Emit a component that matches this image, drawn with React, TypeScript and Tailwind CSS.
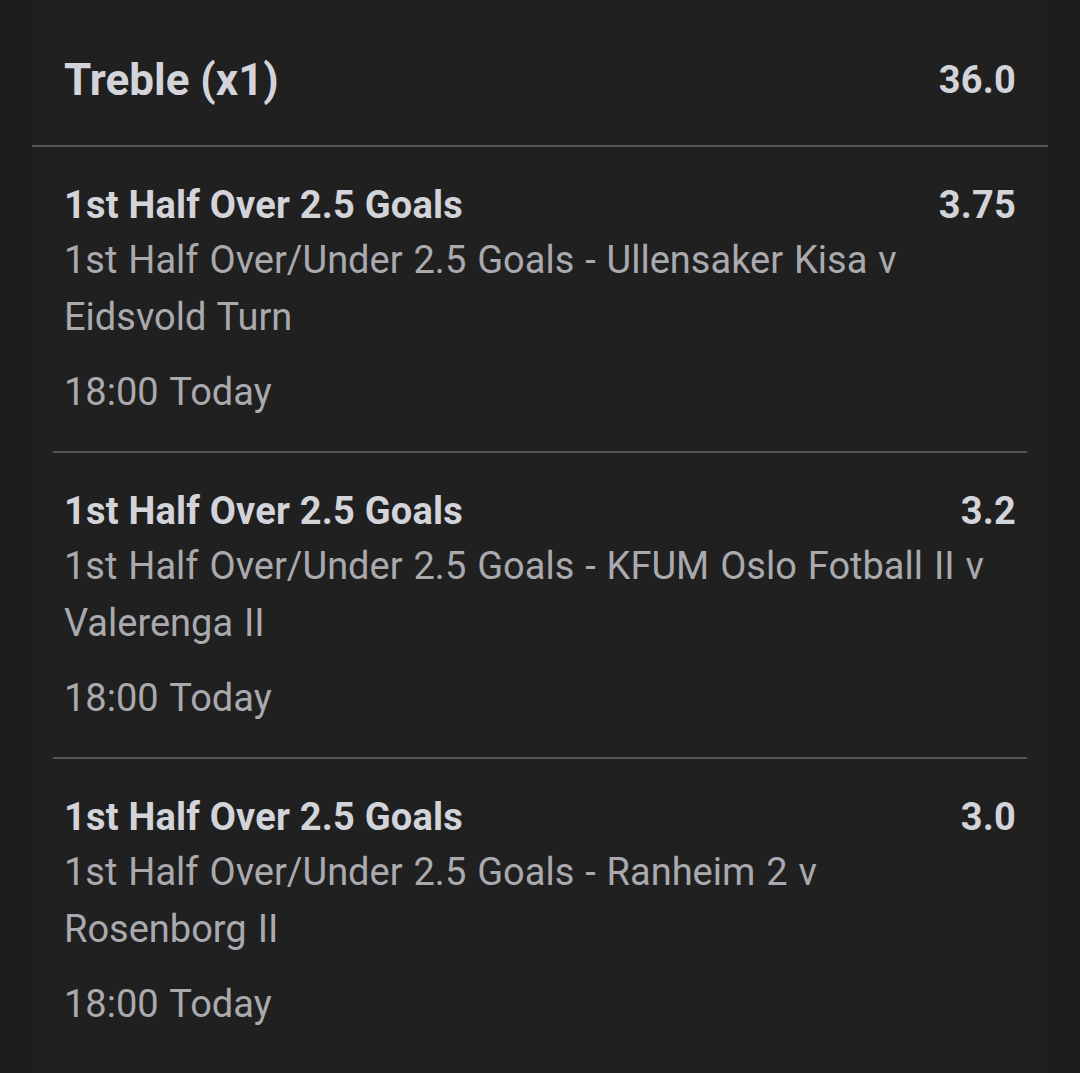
import React from 'react';

interface Selection {
  id: number;
  title: string;
  market: string;
  odds: string;
  time: string;
}

const selections: Selection[] = [
  {
    id: 1,
    title: '1st Half Over 2.5 Goals',
    market: '1st Half Over/Under 2.5 Goals - Ullensaker Kisa v Eidsvold Turn',
    odds: '3.75',
    time: '18:00 Today',
  },
  {
    id: 2,
    title: '1st Half Over 2.5 Goals',
    market: '1st Half Over/Under 2.5 Goals - KFUM Oslo Fotball II v Valerenga II',
    odds: '3.2',
    time: '18:00 Today',
  },
  {
    id: 3,
    title: '1st Half Over 2.5 Goals',
    market: '1st Half Over/Under 2.5 Goals - Ranheim 2 v Rosenborg II',
    odds: '3.0',
    time: '18:00 Today',
  },
];

const App: React.FC = () => {
  return (
    <div
      className="min-h-[1073px] bg-[#1c1c1d] px-[32px]"
      style={{ fontFamily: 'Roboto, "Noto Sans", sans-serif' }}
    >
      <div className="min-h-[1073px] bg-[#202021]">
        {/* Header */}
        <div className="flex items-center justify-between px-[32px] pt-[52px] pb-[37px] border-b-2 border-[#565658]">
          <span className="text-[44px] leading-[56px] font-bold text-[#d3d3da]">Treble (x1)</span>
          <span className="text-[38px] leading-[56px] font-bold tracking-[0.2px] text-[#d3d3da]">36.0</span>
        </div>

        {/* Selections */}
        <div className="px-[21px]">
          {selections.map((sel, i) => (
            <div
              key={sel.id}
              className={`pt-[31px] pb-[31px] ${i < selections.length - 1 ? 'border-b-2 border-[#565658]' : ''}`}
            >
              <div className="px-[11px]">
                <div className="flex items-center justify-between">
                  <span className="text-[38px] leading-[54px] font-bold tracking-[0.2px] text-[#d3d3da]">
                    {sel.title}
                  </span>
                  <span className="text-[38px] leading-[54px] font-bold tracking-[0.2px] text-[#d3d3da]">
                    {sel.odds}
                  </span>
                </div>
                <div className="w-[924px] text-[38px] leading-[57px] [word-spacing:1.5px] text-[#aaaaae]">
                  {sel.market}
                </div>
                <div className="mt-[18px] text-[38px] leading-[56px] [word-spacing:2px] text-[#aaaaae]">
                  {sel.time}
                </div>
              </div>
            </div>
          ))}
        </div>
      </div>
    </div>
  );
};

export default App;
